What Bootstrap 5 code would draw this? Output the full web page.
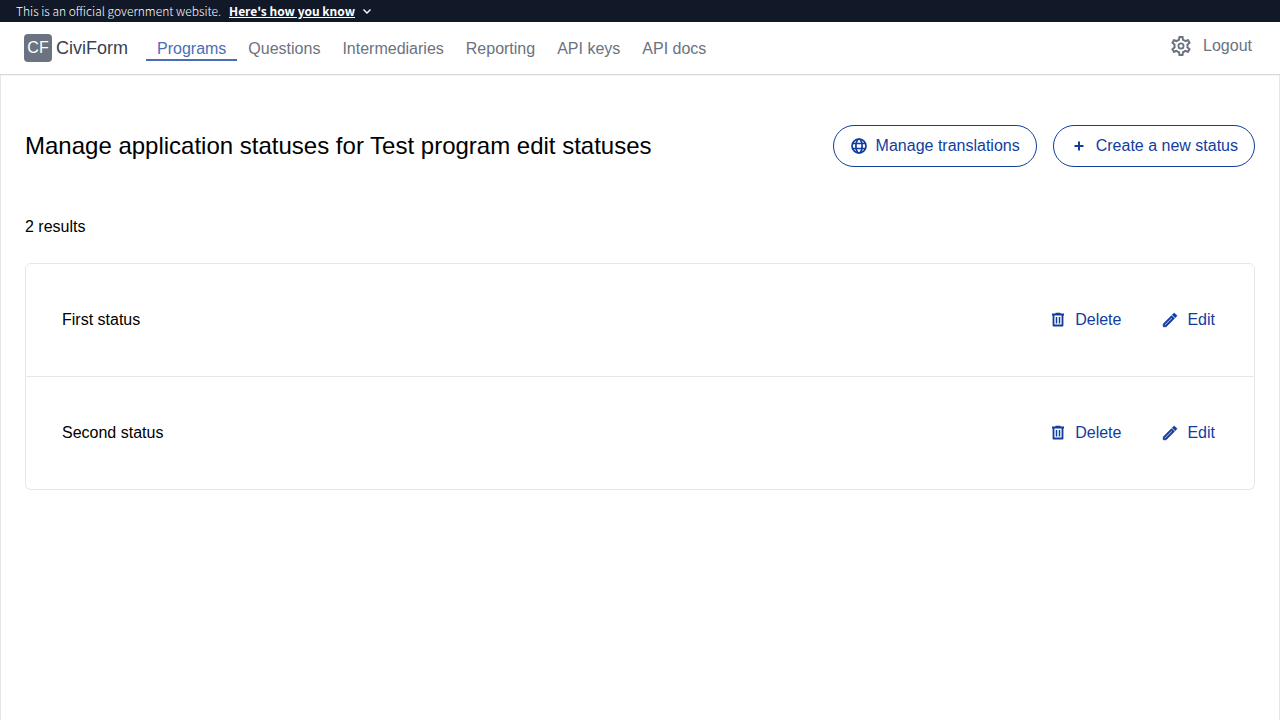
<!DOCTYPE html>
<html lang="en">
<head>
<meta charset="utf-8">
<meta name="viewport" content="width=device-width, initial-scale=1">
<title>Manage application statuses</title>
<link href="https://cdn.jsdelivr.net/npm/bootstrap@5.3.0/dist/css/bootstrap.min.css" rel="stylesheet">
<style>
  body { font-family: "Liberation Sans", Arial, sans-serif; font-size: 16px; line-height: 24px; color: #000; }
  svg { display: block; flex: none; }
  .gov-banner { background: #111827; color: #fff; font: 300 12px/22px "Noto Sans CJK SC", sans-serif; height: 22px; }
  .gov-banner button { font: inherit; font-weight: 700; color: #fff; gap: 6px; }
  .site-header { height: 52px; padding: 0 28px 0 24px; background: #fff; box-shadow: 0 1px 2px rgba(0,0,0,.1); position: relative; color: #6b7280; }
  .brand-link { margin-right: 18px; }
  .brand-mark { width: 28px; height: 28px; border-radius: 4px; background: #6b7280; color: #fff; font-size: 16px; line-height: 28px; text-align: center; }
  .brand-name { font-size: 18px; color: #374151; }
  .site-nav a { color: #6b7280; padding: 4px 11px 0; line-height: 20px; border-bottom: 2px solid transparent; }
  .site-nav a.active { color: #4b6cb7; border-color: #4b6cb7; }
  .page-body { min-height: calc(100vh - 74px); border: solid #e5e7eb; border-width: 1px 1px 0; padding: 50px 24px 24px; }
  h1 { font-size: 24px; line-height: 32px; font-weight: 400; }
  .btn-round, .btn-plain { --bs-btn-color: #113d9f; --bs-btn-hover-color: #113d9f; --bs-btn-line-height: 24px; --bs-btn-padding-y: 8px; --bs-btn-padding-x: 16px; gap: 8px; }
  .btn-round { --bs-btn-border-color: #113d9f; --bs-btn-hover-border-color: #113d9f; --bs-btn-hover-bg: #eff6ff; }
  .status-list { --bs-list-group-border-color: #e5e7eb; --bs-list-group-color: #000; --bs-list-group-item-padding-x: 36px; --bs-list-group-item-padding-y: 35px; }
  .status-list .list-group-item { padding-right: 22px; }
  .row-actions { gap: 6px; }
</style>
</head>
<body>
<div class="gov-banner d-flex align-items-center px-3 gap-2">
  <span>This is an official government website.</span>
  <button type="button" class="btn p-0 border-0 d-flex align-items-center"><span class="text-decoration-underline">Here's how you know</span>
    <svg width="12" height="12" viewBox="0 0 12 12" fill="none" stroke="currentColor" stroke-width="1.4" aria-hidden="true"><path d="M2.5 4.5 6 8l3.500-3.500"/></svg>
  </button>
</div>
<header class="site-header d-flex align-items-center">
  <a href="#" class="brand-link d-flex align-items-center gap-1 text-decoration-none"><span class="brand-mark">CF</span><span class="brand-name">CiviForm</span></a>
  <nav class="site-nav d-flex" aria-label="Main">
    <a href="#" class="active text-decoration-none" aria-current="page">Programs</a>
    <a href="#" class="text-decoration-none">Questions</a>
    <a href="#" class="text-decoration-none">Intermediaries</a>
    <a href="#" class="text-decoration-none">Reporting</a>
    <a href="#" class="text-decoration-none">API keys</a>
    <a href="#" class="text-decoration-none">API docs</a>
  </nav>
  <div class="ms-auto d-flex align-items-center mb-1 gap-2">
    <a href="#" class="text-reset" aria-label="Settings"><svg width="26" height="24" viewBox="0 0 26 24" fill="currentColor"><path d="M19.430 12.980c.04-.32.07-.64.07-.98s-.03-.66-.07-.98l2.110-1.650c.19-.15.24-.42.12-.64l-2-3.460c-.12-.22-.39-.3-.61-.22l-2.490 1c-.52-.4-1.080-.73-1.690-.98l-.38-2.650C14.460 2.180 14.250 2 14 2h-4c-.25 0-.46.18-.49.42l-.38 2.650c-.61.25-1.170.59-1.690.98l-2.490-1c-.23-.09-.49 0-.61.22l-2 3.460c-.13.22-.07.49.12.64l2.110 1.650c-.04.32-.07.65-.07.98s.03.66.07.98l-2.110 1.650c-.19.15-.24.42-.12.64l2 3.460c.12.22.39.3.61.22l2.490-1c.52.4 1.080.73 1.690.98l.38 2.650c.03.24.24.42.49.42h4c.25 0 .46-.18.49-.42l.38-2.650c.61-.25 1.170-.59 1.690-.98l2.490 1c.23.09.49 0 .61-.22l2-3.460c.12-.22.07-.49-.12-.64l-2.110-1.650zm-1.980-1.710c.04.31.05.52.05.73s-.02.43-.05.73l-.14 1.130.89.7 1.080.84-.7 1.210-1.270-.51-1.040-.42-.9.680c-.43.32-.84.56-1.250.73l-1.060.43-.16 1.130-.2 1.350h-1.400l-.19-1.350-.16-1.130-1.060-.43c-.43-.18-.83-.41-1.230-.71l-.91-.7-1.060.43-1.270.51-.7-1.210 1.080-.84.89-.7-.14-1.130c-.03-.31-.05-.54-.05-.74s.02-.43.05-.73l.14-1.130-.89-.7-1.080-.84.7-1.210 1.270.51 1.040.42.9-.68c.43-.32.84-.56 1.250-.73l1.060-.43.16-1.130.2-1.350h1.390l.19 1.350.16 1.130 1.060.43c.43.18.83.41 1.230.71l.91.7 1.060-.43 1.270-.51.7 1.210-1.070.85-.89.7.14 1.130zM12 8.500a3.500 3.500 0 1 0 0 7 3.500 3.500 0 0 0 0-7zm0 5.200a1.700 1.700 0 1 1 0-3.400 1.700 1.700 0 0 1 0 3.400z"/></svg></a>
    <a href="#" class="text-reset text-decoration-none">Logout</a>
  </div>
</header>
<main class="page-body">
  <div class="d-flex flex-wrap align-items-center justify-content-between gap-3">
    <h1 class="m-0">Manage application statuses for Test program edit statuses</h1>
    <div class="d-flex gap-3">
      <button type="button" class="btn btn-round rounded-pill d-flex align-items-center"><svg width="18" height="18" viewBox="0 0 18 18" fill="none" stroke="currentColor" stroke-width="1.700" aria-hidden="true"><circle cx="9" cy="9" r="7"/><ellipse cx="9" cy="9" rx="3.100" ry="7"/><path d="M2 6.500h14M2 11.500h14"/></svg>Manage translations</button>
      <button type="button" class="btn btn-round rounded-pill d-flex align-items-center"><svg width="18" height="18" viewBox="0 0 18 18" fill="none" stroke="currentColor" stroke-width="2" aria-hidden="true"><path d="M9 4.500v9M4.500 9h9"/></svg>Create a new status</button>
    </div>
  </div>
  <p class="mt-5 mb-4">2 results</p>
  <ul class="list-group status-list">
    <li class="list-group-item d-flex align-items-center justify-content-between">
      <span>First status</span>
      <div class="row-actions d-flex">
        <button type="button" class="btn btn-plain d-flex align-items-center"><svg width="18" height="18" viewBox="0 0 18 18" fill="none" stroke="currentColor" aria-hidden="true"><path d="M3 3.500h12" stroke-width="2"/><path d="M6.500 2.500h5" stroke-width="1.500"/><path d="M4.500 4v10.500h9V4" stroke-width="1.800" stroke-linejoin="round"/><path d="M7.500 6v6.500M10.500 6v6.500" stroke-width="1.500"/></svg>Delete</button>
        <button type="button" class="btn btn-plain d-flex align-items-center"><svg width="18" height="18" viewBox="0 0 24 24" fill="currentColor" aria-hidden="true"><path d="M3 17.250V21h3.750L17.810 9.940l-3.750-3.750L3 17.250zM5.900 19H5v-.9l9.060-9.080.92.92L5.900 19zM20.710 5.630l-2.340-2.340a1 1 0 0 0-1.410 0l-1.830 1.830 3.750 3.750 1.830-1.830a1 1 0 0 0 0-1.410z" stroke="currentColor" stroke-width="1"/></svg>Edit</button>
      </div>
    </li>
    <li class="list-group-item d-flex align-items-center justify-content-between">
      <span>Second status</span>
      <div class="row-actions d-flex">
        <button type="button" class="btn btn-plain d-flex align-items-center"><svg width="18" height="18" viewBox="0 0 18 18" fill="none" stroke="currentColor" aria-hidden="true"><path d="M3 3.500h12" stroke-width="2"/><path d="M6.500 2.500h5" stroke-width="1.500"/><path d="M4.500 4v10.500h9V4" stroke-width="1.800" stroke-linejoin="round"/><path d="M7.500 6v6.500M10.500 6v6.500" stroke-width="1.500"/></svg>Delete</button>
        <button type="button" class="btn btn-plain d-flex align-items-center"><svg width="18" height="18" viewBox="0 0 24 24" fill="currentColor" aria-hidden="true"><path d="M3 17.250V21h3.750L17.810 9.940l-3.750-3.750L3 17.250zM5.900 19H5v-.9l9.060-9.080.92.92L5.900 19zM20.710 5.630l-2.340-2.340a1 1 0 0 0-1.410 0l-1.830 1.830 3.750 3.750 1.830-1.830a1 1 0 0 0 0-1.410z" stroke="currentColor" stroke-width="1"/></svg>Edit</button>
      </div>
    </li>
  </ul>
</main>
<script src="https://cdn.jsdelivr.net/npm/bootstrap@5.3.0/dist/js/bootstrap.bundle.min.js"></script>
</body>
</html>
